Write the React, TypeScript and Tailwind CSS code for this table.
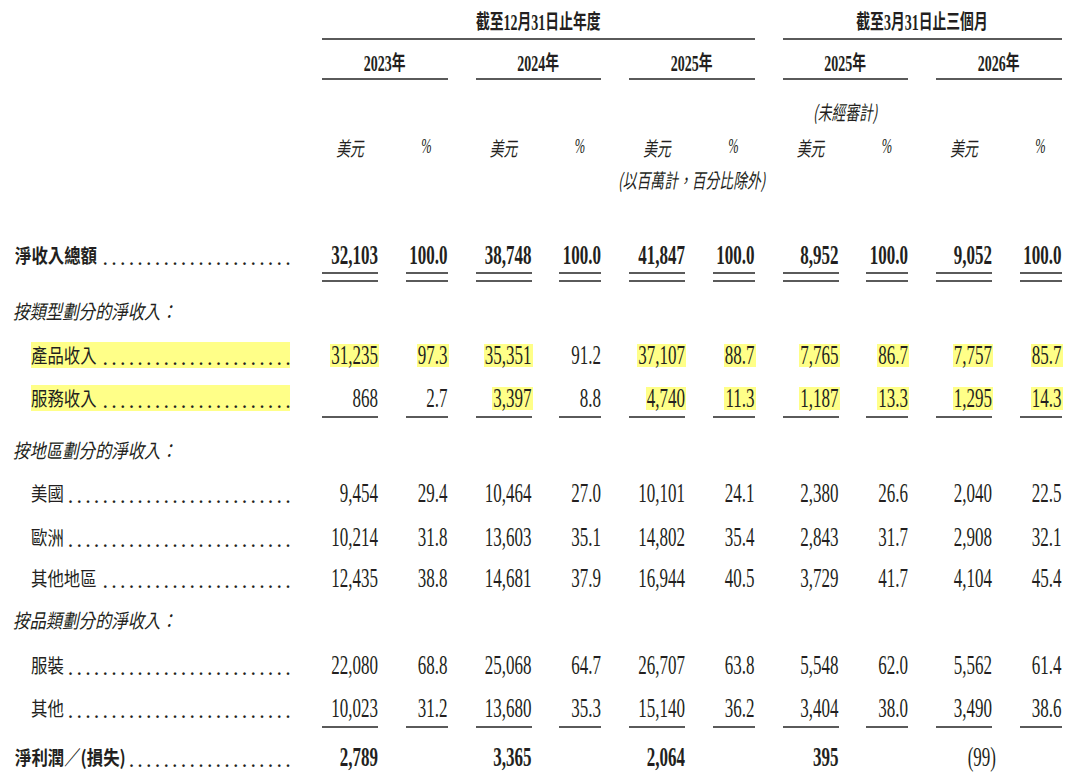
import React from 'react';

const PM = ['', 'ml-[28px]', 'ml-[28px]', 'ml-[28px]', 'ml-[28px]'];
const HL = 'bg-[#ffff88]';
const LINE = 'bg-[#5a5a5a]';

function Grid({ cls, label, render }: { cls: string; label?: React.ReactNode; render: (i: number) => React.ReactNode }) {
  return (
    <div className={`flex shrink-0 ${cls}`}>
      <div className="w-[322px] shrink-0 flex items-center h-full">{label}</div>
      {[0, 1, 2, 3, 4].map((i) => (
        <div key={i} className={`w-[125.5px] shrink-0 flex justify-between h-full ${PM[i]}`}>
          {render(i)}
        </div>
      ))}
    </div>
  );
}

function Num({ v, bold }: { v: string; bold?: boolean }) {
  const hl = v.startsWith('*');
  const t = hl ? v.slice(1) : v;
  const paren = t.endsWith(')');
  return (
    <span className={`inline-flex items-center h-[23px] px-[1px] ${paren ? '-mr-[5px]' : '-mr-[1px]'} ${hl ? HL : ''}`}>
      <span
        className={`inline-block font-['Liberation_Serif',serif] text-[17px] leading-[17px] scale-y-[1.6] ${bold ? 'font-bold' : ''}`}
      >
        {t}
      </span>
    </span>
  );
}

function CJK({ children, bold, italic }: { children: React.ReactNode; bold?: boolean; italic?: boolean }) {
  return (
    <span
      className={`inline-block shrink-0 whitespace-nowrap font-['Noto_Sans_CJK_TC','Noto_Sans_CJK_SC',sans-serif] text-[16.4px] leading-[18px] scale-y-[1.2] ${bold ? 'font-bold' : 'font-normal'} ${italic ? 'italic' : ''}`}
    >
      {children}
    </span>
  );
}

function Dots({ count }: { count: number }) {
  return (
    <div className="flex-1 flex justify-end h-full items-center">
      <span className="block whitespace-nowrap font-['Liberation_Serif',serif] font-bold text-[16px] leading-[16px] tracking-[4.7px] -mr-[4.7px] translate-y-[5px]">
        {'.'.repeat(count)}
      </span>
    </div>
  );
}

function HT({ children, bold, italic }: { children: React.ReactNode; bold?: boolean; italic?: boolean }) {
  return (
    <span
      className={`inline-block whitespace-nowrap scale-y-[1.45] font-['Noto_Sans_CJK_TC','Noto_Sans_CJK_SC',sans-serif] text-[13.8px] leading-[16px] ${bold ? 'font-bold' : 'font-normal'} ${italic ? 'italic' : ''}`}
    >
      {children}
    </span>
  );
}

function HD({ children }: { children: React.ReactNode }) {
  return (
    <span className="inline-block scale-y-[1.15] font-['Liberation_Serif',serif] text-[14px]">{children}</span>
  );
}

type Row = {
  kind: 'total' | 'section' | 'item' | 'net';
  label: string;
  vals?: string[][];
  hl?: boolean;
  mt: string;
  under?: 'single' | 'double';
};

const rows: Row[] = [
  {
    kind: 'total',
    label: '淨收入總額',
    mt: 'mt-[48px]',
    under: 'double',
    vals: [
      ['32,103', '100.0'],
      ['38,748', '100.0'],
      ['41,847', '100.0'],
      ['8,952', '100.0'],
      ['9,052', '100.0'],
    ],
  },
  { kind: 'section', label: '按類型劃分的淨收入：', mt: 'mt-[15px]' },
  {
    kind: 'item',
    label: '產品收入',
    hl: true,
    mt: 'mt-[16px]',
    vals: [
      ['*31,235', '*97.3'],
      ['*35,351', '91.2'],
      ['*37,107', '*88.7'],
      ['*7,765', '*86.7'],
      ['*7,757', '*85.7'],
    ],
  },
  {
    kind: 'item',
    label: '服務收入',
    hl: true,
    mt: 'mt-[15px]',
    under: 'single',
    vals: [
      ['868', '2.7'],
      ['*3,397', '8.8'],
      ['*4,740', '*11.3'],
      ['*1,187', '*13.3'],
      ['*1,295', '*14.3'],
    ],
  },
  { kind: 'section', label: '按地區劃分的淨收入：', mt: 'mt-[18px]' },
  {
    kind: 'item',
    label: '美國',
    mt: 'mt-[15px]',
    vals: [
      ['9,454', '29.4'],
      ['10,464', '27.0'],
      ['10,101', '24.1'],
      ['2,380', '26.6'],
      ['2,040', '22.5'],
    ],
  },
  {
    kind: 'item',
    label: '歐洲',
    mt: 'mt-[16px]',
    vals: [
      ['10,214', '31.8'],
      ['13,603', '35.1'],
      ['14,802', '35.4'],
      ['2,843', '31.7'],
      ['2,908', '32.1'],
    ],
  },
  {
    kind: 'item',
    label: '其他地區',
    mt: 'mt-[13px]',
    vals: [
      ['12,435', '38.8'],
      ['14,681', '37.9'],
      ['16,944', '40.5'],
      ['3,729', '41.7'],
      ['4,104', '45.4'],
    ],
  },
  { kind: 'section', label: '按品類劃分的淨收入：', mt: 'mt-[14px]' },
  {
    kind: 'item',
    label: '服裝',
    mt: 'mt-[17px]',
    vals: [
      ['22,080', '68.8'],
      ['25,068', '64.7'],
      ['26,707', '63.8'],
      ['5,548', '62.0'],
      ['5,562', '61.4'],
    ],
  },
  {
    kind: 'item',
    label: '其他',
    mt: 'mt-[15px]',
    under: 'single',
    vals: [
      ['10,023', '31.2'],
      ['13,680', '35.3'],
      ['15,140', '36.2'],
      ['3,404', '38.0'],
      ['3,490', '38.6'],
    ],
  },
  {
    kind: 'net',
    label: '淨利潤／(損失)',
    mt: 'mt-[15px]',
    vals: [['2,789', ''], ['3,365', ''], ['2,064', ''], ['395', ''], ['(99)', '']],
  },
];

function LineRow({ cls }: { cls: string }) {
  return (
    <Grid
      cls={`h-[2px] ${cls}`}
      render={() => (
        <>
          <div className={`w-[56px] h-[2px] ${LINE}`} />
          <div className={`w-[42px] h-[2px] ${LINE}`} />
        </>
      )}
    />
  );
}

// last dot sits at x≈288; each dot step 8.7px
function dotCount(labelEnd: number) {
  return Math.max(0, Math.floor((286 - labelEnd) / 8.7) + 1);
}

function labelWidth(s: string) {
  let w = 0;
  for (const ch of s) w += ch === '(' || ch === ')' ? 6 : 16.4;
  return w;
}

function DataRow({ r }: { r: Row }) {
  let label: React.ReactNode = null;
  if (r.kind === 'total' || r.kind === 'net') {
    label = (
      <div className="ml-[15px] w-[275px] h-[26px] flex items-center">
        <CJK bold>{r.label}</CJK>
        <Dots count={dotCount(15 + labelWidth(r.label) + 1)} />
      </div>
    );
  } else if (r.kind === 'section') {
    label = (
      <div className="ml-[13px] h-[26px] flex items-center">
        <CJK italic>{r.label}</CJK>
      </div>
    );
  } else {
    label = (
      <div className={`ml-[31px] w-[259px] h-[26px] flex items-center ${r.hl ? HL : ''}`}>
        <CJK>{r.label}</CJK>
        <Dots count={dotCount(31 + labelWidth(r.label) + 1)} />
      </div>
    );
  }
  const bold = r.kind === 'total' || r.kind === 'net';
  return (
    <Grid
      cls={`h-[28px] ${r.mt}`}
      label={label}
      render={(i) =>
        r.vals ? (
          <>
            <div className="w-[56px] flex justify-end items-center">
              <Num v={r.vals[i][0]} bold={bold && r.vals[i][0] !== '(99)'} />
            </div>
            <div className="w-[42px] flex justify-end items-center">
              {r.vals[i][1] ? <Num v={r.vals[i][1]} bold={bold} /> : null}
            </div>
          </>
        ) : null
      }
    />
  );
}

export default function App() {
  return (
    <div className="w-[1080px] h-[783px] bg-white overflow-hidden text-[#231f20] flex flex-col">
      {/* header line 1 */}
      <div className="flex shrink-0 mt-[8px] h-[28px]">
        <div className="w-[322px] shrink-0" />
        <div className="w-[432.5px] shrink-0 flex justify-center items-center">
          <HT bold>
            截至<HD>12</HD>月<HD>31</HD>日止年度
          </HT>
        </div>
        <div className="ml-[28px] w-[279px] shrink-0 flex justify-center items-center">
          <HT bold>
            截至<HD>3</HD>月<HD>31</HD>日止三個月
          </HT>
        </div>
      </div>
      <div className="flex shrink-0 mt-[2px] h-[2px]">
        <div className="w-[322px] shrink-0" />
        <div className={`w-[432.5px] shrink-0 ${LINE}`} />
        <div className={`ml-[28px] w-[279px] shrink-0 ${LINE}`} />
      </div>
      {/* years */}
      <Grid
        cls="mt-[9px] h-[28px]"
        render={(i) => (
          <div className="w-full flex justify-center items-center">
            <HT bold>
              <HD>{['2023', '2024', '2025', '2025', '2026'][i]}</HD>年
            </HT>
          </div>
        )}
      />
      <Grid cls="mt-[1px] h-[2px]" render={() => <div className={`w-full h-[2px] ${LINE}`} />} />
      {/* unaudited */}
      <Grid
        cls="mt-[17px] h-[28px]"
        render={(i) =>
          i === 3 ? (
            <div className="w-full flex justify-center items-center">
              <HT italic>(未經審計)</HT>
            </div>
          ) : null
        }
      />
      {/* currency */}
      <Grid
        cls="mt-[8px] h-[28px]"
        render={() => (
          <>
            <div className="w-[56px] flex justify-center items-center">
              <HT italic>美元</HT>
            </div>
            <div className="w-[42px] flex justify-center items-center">
              <span className="inline-block scale-y-[1.6] font-['Liberation_Serif',serif] italic text-[12.5px]">%</span>
            </div>
          </>
        )}
      />
      <Grid
        cls="mt-[4px] h-[28px]"
        render={(i) =>
          i === 2 ? (
            <div className="w-full flex justify-center items-center">
              <HT italic>(以百萬計，百分比除外)</HT>
            </div>
          ) : null
        }
      />
      {rows.map((r, idx) => (
        <React.Fragment key={idx}>
          <DataRow r={r} />
          {r.under === 'double' ? (
            <>
              <LineRow cls="mt-[3px]" />
              <LineRow cls="mt-[6px]" />
            </>
          ) : r.under === 'single' ? (
            <LineRow cls="mt-[4px]" />
          ) : null}
        </React.Fragment>
      ))}
    </div>
  );
}
